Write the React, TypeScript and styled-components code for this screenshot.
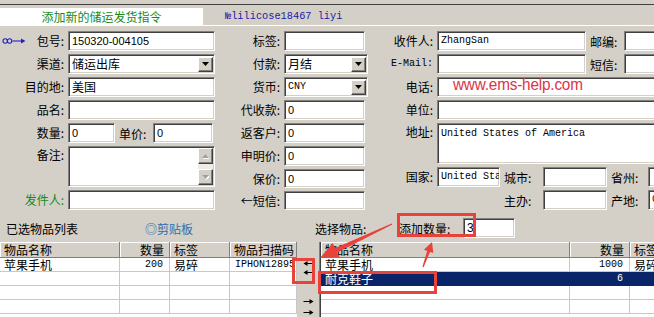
import { createGlobalStyle, styled } from 'styled-components'

const CJK = `"Noto Sans CJK SC", "Liberation Sans", sans-serif`
const SANS = `"Liberation Sans", Arial, sans-serif`
const MONO = `"Liberation Mono", "Courier New", monospace`
const FACE = '#d4d0c8'
const MARK = '#e8433b'

const GlobalStyle = createGlobalStyle`
  html, body { margin: 0; padding: 0; background: ${FACE}; }
  body { overflow: hidden; }
`

const Page = styled.div`
  position: relative;
  width: 654px;
  height: 317px;
  overflow: hidden;
  background: ${FACE};
  font-family: ${CJK};
  font-size: 12px;
  color: #000;
`

const TopEdge = styled.div`
  height: 4px;
  border-bottom: 1px solid #404040;
`

const TabStrip = styled.div`
  display: flex;
  align-items: flex-end;
  height: 20px;
  border-bottom: 1px solid #fff;
`

const TitleTab = styled.div`
  width: 203px;
  height: 17px;
  background: #fff;
  color: #178a17;
  text-align: center;
  line-height: 17px;
`

const OrderNo = styled.div`
  margin-left: 22px;
  height: 17px;
  line-height: 17px;
  color: #1a1aa8;
  font-family: ${MONO};
  font-size: 10.3px;
`

const Form = styled.div`
  display: flex;
  align-items: flex-start;
  box-sizing: border-box;
  height: 185px;
  padding-top: 5px;
`

const FormCol = styled.div<{ $w: number; $labelW: number; $rows: string }>`
  display: grid;
  flex-shrink: 0;
  width: ${p => p.$w}px;
  grid-template-columns: ${p => p.$labelW}px 1fr;
  grid-template-rows: ${p => p.$rows};
  row-gap: 3px;
`

const Label = styled.div<{ $top?: boolean; $mono?: boolean; $color?: string }>`
  display: flex;
  align-items: ${p => (p.$top ? 'flex-start' : 'center')};
  justify-content: flex-end;
  padding: ${p => (p.$top ? '1px 4px 0 2px' : '0 4px 0 2px')};
  line-height: 16px;
  white-space: nowrap;
  color: ${p => p.$color ?? '#000'};
  font-family: ${p => (p.$mono ? MONO : CJK)};
  font-size: ${p => (p.$mono ? '10px' : '12px')};
`

const LinkMark = styled.svg`
  margin-right: auto;
`

const InlineLabel = styled.div<{ $w: number }>`
  flex-shrink: 0;
  width: ${p => p.$w}px;
  box-sizing: border-box;
  padding-left: 4px;
  display: flex;
  align-items: center;
  white-space: nowrap;
`

const FieldRow = styled.div`
  display: flex;
  height: 100%;
`

const Spacer = styled.div<{ $w: number }>`
  flex-shrink: 0;
  width: ${p => p.$w}px;
`

type Face = 'sans' | 'mono' | 'cjk'

const Field = styled.div<{ $w?: number; $face?: Face; $multi?: boolean }>`
  box-sizing: border-box;
  flex-shrink: 0;
  display: flex;
  align-items: ${p => (p.$multi ? 'stretch' : 'center')};
  width: ${p => (p.$w ? `${p.$w}px` : '100%')};
  height: 100%;
  background: #fff;
  border: 1px solid;
  border-color: #808080 #fff #fff #808080;
  box-shadow: inset 1px 1px 0 #404040, inset -1px -1px 0 ${FACE};
  padding: ${p => (p.$multi ? '2px 1px 1px 3px' : '0 1px 0 3px')};
  overflow: hidden;
  white-space: nowrap;
  font-family: ${p => (p.$face === 'mono' ? MONO : p.$face === 'cjk' ? CJK : SANS)};
  font-size: ${p => (p.$face === 'mono' ? '10px' : p.$face === 'cjk' ? '12px' : '11px')};
  line-height: 16px;
`

const FieldText = styled.span`
  flex: 1;
  overflow: hidden;
`

const DropBtn = styled.div`
  box-sizing: border-box;
  flex-shrink: 0;
  width: 15px;
  height: 15px;
  background: ${FACE};
  border: 1px solid;
  border-color: #fff #404040 #404040 #fff;
  box-shadow: inset -1px -1px 0 #808080;
  display: flex;
  align-items: center;
  justify-content: center;
`

const ScrollBar = styled.div`
  display: flex;
  flex-direction: column;
  width: 15px;
  flex-shrink: 0;
  margin: -1px 0 0;
  background: #eeebe6;
`

const ScrollBtn = styled(DropBtn)`
  height: 16px;
`

const ScrollTrack = styled.div`
  flex: 1;
`

const ListBar = styled.div`
  display: flex;
  align-items: center;
  box-sizing: border-box;
  height: 31px;
  padding-top: 3px;
`

const ListTitle = styled.div`
  box-sizing: border-box;
  width: 145px;
  padding-left: 6px;
`

const Clipboard = styled.div`
  width: 152px;
  color: #2f6fae;
`

const PickLabel = styled.div`
  box-sizing: border-box;
  width: 102px;
  padding-left: 18px;
`

const QtyLabel = styled.div`
  width: 64px;
`

const QtyInput = styled(Field)`
  width: 52px;
  height: 20px;
  font-size: 12px;
`

const Caret = styled.span`
  display: inline-block;
  width: 1px;
  height: 13px;
  margin-left: 1px;
  background: #000;
`

const Tables = styled.div`
  display: flex;
  height: 75px;
`

const TableBox = styled.div<{ $w?: number; $sunken?: boolean }>`
  ${p => (p.$w ? `width: ${p.$w}px;` : 'flex: 1;')}
  flex-shrink: 0;
  background: #fff;
  overflow: hidden;
  ${p => (p.$sunken ? 'border-left: 1px solid #808080; box-shadow: inset 1px 0 0 #404040; padding-left: 1px;' : '')}
`

const GridRow = styled.div<{ $cols: string; $sel?: boolean }>`
  display: grid;
  grid-template-columns: ${p => p.$cols};
  background: ${p => (p.$sel ? '#0a246a' : 'transparent')};
  color: ${p => (p.$sel ? '#fff' : '#000')};
`

const HeadCell = styled.div<{ $right?: boolean }>`
  box-sizing: border-box;
  height: 16px;
  padding: 0 5px 0 4px;
  line-height: 15px;
  background: ${FACE};
  border-right: 1px solid #808080;
  border-bottom: 1px solid #808080;
  box-shadow: inset 1px 1px 0 #fff;
  text-align: ${p => (p.$right ? 'right' : 'left')};
  white-space: nowrap;
  overflow: hidden;
`

const Cell = styled.div<{ $right?: boolean; $mono?: boolean; $sel?: boolean }>`
  box-sizing: border-box;
  height: 14px;
  padding: 0 6px 0 4px;
  line-height: 13px;
  border-right: 1px solid ${p => (p.$sel ? '#0a246a' : '#c8c8c8')};
  border-bottom: 1px solid ${p => (p.$sel ? '#0a246a' : '#c8c8c8')};
  text-align: ${p => (p.$right ? 'right' : 'left')};
  font-family: ${p => (p.$mono ? MONO : CJK)};
  font-size: ${p => (p.$mono ? '10px' : '12px')};
  white-space: nowrap;
  overflow: hidden;
`

const ArrowCol = styled.div`
  display: flex;
  flex-direction: column;
  align-items: center;
  width: 22px;
  flex-shrink: 0;
  padding-top: 17px;
`

const ArrowBtn = styled.div<{ $gap?: number }>`
  display: flex;
  align-items: center;
  height: 9px;
  margin-top: ${p => p.$gap ?? 0}px;
`

const Watermark = styled.div`
  position: absolute;
  left: 453px;
  top: 75px;
  color: #dc3548;
  font-family: ${SANS};
  font-size: 17px;
  letter-spacing: -0.2px;
  transform: scaleX(0.9);
  transform-origin: left center;
  white-space: nowrap;
  pointer-events: none;
`

const Marks = styled.svg`
  position: absolute;
  left: 0;
  top: 0;
  pointer-events: none;
`

function Triangle({ up, dim }: { up?: boolean; dim?: boolean }) {
  const pts = up ? '0,4 7,4 3.5,0' : '0,0 7,0 3.5,4'
  return (
    <svg width="7" height="5" viewBox="0 0 7 5">
      {dim && <polygon points={pts} fill="#fff" transform="translate(1,1)" />}
      <polygon points={pts} fill={dim ? '#a0a0a0' : '#000'} />
    </svg>
  )
}

function Arrow({ left }: { left?: boolean }) {
  return (
    <svg width="11" height="7" viewBox="0 0 11 7">
      <g transform={left ? undefined : 'translate(11,0) scale(-1,1)'}>
        <path d="M1 3.5H10.5" stroke="#000" strokeWidth="1" />
        <polygon points="0.5,3.5 4.5,1 4.5,6" fill="#000" />
      </g>
    </svg>
  )
}

function Combo({ value, face }: { value: string; face?: Face }) {
  return (
    <Field $face={face}>
      <FieldText>{value}</FieldText>
      <DropBtn>
        <Triangle />
      </DropBtn>
    </Field>
  )
}

const LEFT_COLS = '120px 50px 60px 67px'
const RIGHT_COLS = '249px 60px 60px'

const leftRows = [['苹果手机', '200', '易碎', 'IPHON12895'], [], [], []]
const rightRows = [['苹果手机', '1000', '易碎'], ['耐克鞋子', '6', ''], [], []]

export default function App() {
  return (
    <Page>
      <GlobalStyle />
      <TopEdge />
      <TabStrip>
        <TitleTab>添加新的储运发货指令</TitleTab>
        <OrderNo>№lilicose18467 liyi</OrderNo>
      </TabStrip>

      <Form>
        <FormCol $w={215} $labelW={68} $rows="repeat(5, 20px) 41px 20px">
          <Label>
            <LinkMark width="24" height="8" viewBox="0 0 24 8">
              <circle cx="3.2" cy="4" r="2.2" fill="none" stroke="#2323c4" strokeWidth="1.1" />
              <circle cx="7.6" cy="4" r="2.2" fill="none" stroke="#2323c4" strokeWidth="1.1" />
              <path d="M10.5 4H20" stroke="#2323c4" strokeWidth="1.1" />
              <polygon points="23.5,4 19,1.5 19,6.5" fill="#2323c4" />
            </LinkMark>
            包号:
          </Label>
          <Field>150320-004105</Field>
          <Label>渠道:</Label>
          <Combo value="储运出库" face="cjk" />
          <Label>目的地:</Label>
          <Field $face="cjk">美国</Field>
          <Label>品名:</Label>
          <Field />
          <Label>数量:</Label>
          <FieldRow>
            <Field $w={47}>0</Field>
            <InlineLabel $w={38}>单价:</InlineLabel>
            <Field $w={60}>0</Field>
          </FieldRow>
          <Label $top>备注:</Label>
          <Field $multi>
            <FieldText />
            <ScrollBar>
              <ScrollBtn><Triangle up dim /></ScrollBtn>
              <ScrollTrack />
              <ScrollBtn><Triangle dim /></ScrollBtn>
            </ScrollBar>
          </Field>
          <Label $color="#178a17">发件人:</Label>
          <Field />
        </FormCol>

        <FormCol $w={153} $labelW={69} $rows="repeat(6, 20px) 19px 19px">
          <Label>标签:</Label>
          <Field $w={81} />
          <Label>付款:</Label>
          <Combo value="月结" face="cjk" />
          <Label>货币:</Label>
          <Combo value="CNY" face="mono" />
          <Label>代收款:</Label>
          <Field $w={81}>0</Field>
          <Label>返客户:</Label>
          <Field $w={81}>0</Field>
          <Label>申明价:</Label>
          <Field $w={81}>0</Field>
          <Label>保价:</Label>
          <Field $w={81}>0</Field>
          <Label>←短信:</Label>
          <Field $w={81} />
        </FormCol>

        <FormCol $w={320} $labelW={69} $rows="repeat(4, 20px) 41px 20px 20px">
          <Label>收件人:</Label>
          <FieldRow>
            <Field $w={149} $face="mono">ZhangSan</Field>
            <InlineLabel $w={38}>邮编:</InlineLabel>
            <Field $w={50} />
          </FieldRow>
          <Label $mono>E-Mail:</Label>
          <FieldRow>
            <Field $w={149} />
            <InlineLabel $w={38}>短信:</InlineLabel>
            <Field $w={50} />
          </FieldRow>
          <Label>电话:</Label>
          <Field $w={240} />
          <Label>单位:</Label>
          <Field $w={240} />
          <Label $top>地址:</Label>
          <Field $w={240} $multi $face="mono">United States of America</Field>
          <Label>国家:</Label>
          <FieldRow>
            <Field $w={63} $face="mono">United Sta</Field>
            <InlineLabel $w={43}>城市:</InlineLabel>
            <Field $w={64} />
            <InlineLabel $w={41}>省州:</InlineLabel>
            <Field $w={40} />
          </FieldRow>
          <span />
          <FieldRow>
            <Spacer $w={63} />
            <InlineLabel $w={43}>主办:</InlineLabel>
            <Field $w={64} />
            <InlineLabel $w={41}>产地:</InlineLabel>
            <Field $w={40} $face="mono">0</Field>
          </FieldRow>
        </FormCol>
      </Form>

      <ListBar>
        <ListTitle>已选物品列表</ListTitle>
        <Clipboard>◎剪贴板</Clipboard>
        <PickLabel>选择物品:</PickLabel>
        <QtyLabel>添加数量:</QtyLabel>
        <QtyInput $face="sans">
          3<Caret />
        </QtyInput>
      </ListBar>

      <Tables>
        <TableBox $w={297}>
          <GridRow $cols={LEFT_COLS}>
            <HeadCell>物品名称</HeadCell>
            <HeadCell $right>数量</HeadCell>
            <HeadCell>标签</HeadCell>
            <HeadCell>物品扫描码</HeadCell>
          </GridRow>
          {leftRows.map((r, i) => (
            <GridRow key={i} $cols={LEFT_COLS}>
              <Cell>{r[0]}</Cell>
              <Cell $right $mono>{r[1]}</Cell>
              <Cell>{r[2]}</Cell>
              <Cell $mono style={{ paddingRight: 0, paddingLeft: 5 }}>{r[3]}</Cell>
            </GridRow>
          ))}
        </TableBox>

        <ArrowCol>
          <ArrowBtn><Arrow left /></ArrowBtn>
          <ArrowBtn><Arrow left /></ArrowBtn>
          <ArrowBtn $gap={21}><Arrow /></ArrowBtn>
          <ArrowBtn $gap={2}><Arrow /></ArrowBtn>
        </ArrowCol>

        <TableBox $sunken>
          <GridRow $cols={RIGHT_COLS}>
            <HeadCell>物品名称</HeadCell>
            <HeadCell $right>数量</HeadCell>
            <HeadCell>标签</HeadCell>
          </GridRow>
          {rightRows.map((r, i) => {
            const sel = i === 1
            return (
              <GridRow key={i} $cols={RIGHT_COLS} $sel={sel}>
                <Cell $sel={sel}>{r[0]}</Cell>
                <Cell $sel={sel} $right $mono>{r[1]}</Cell>
                <Cell $sel={sel}>{r[2]}</Cell>
              </GridRow>
            )
          })}
        </TableBox>
      </Tables>

      <Watermark>www.ems-help.com</Watermark>

      <Marks width="654" height="317" viewBox="0 0 654 317">
        <g fill="none" stroke={MARK} strokeWidth="3">
          <rect x="398.5" y="214.5" width="76" height="21" />
          <rect x="293.5" y="259.5" width="20" height="23" />
          <rect x="319.5" y="272.5" width="116" height="20" />
        </g>
        <g fill={MARK}>
          <polygon points="320,258 339.7,257.3 337.3,252.4 392.3,224.6 391.7,223.4 335.1,247.9 332.7,242.9" />
          <polygon points="432,242 433.3,253.1 430,251.9 423.6,267.2 422.4,266.8 427.2,250.9 423.9,249.7" />
        </g>
      </Marks>
    </Page>
  )
}
